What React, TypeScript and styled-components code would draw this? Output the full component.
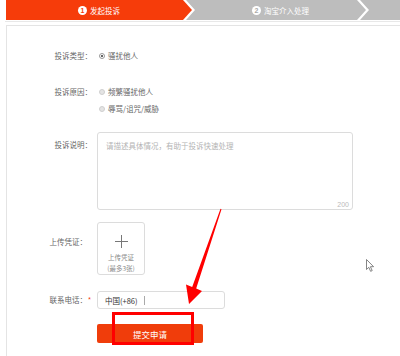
import React from 'react';
import styled, { createGlobalStyle } from 'styled-components';

const GlobalStyle = createGlobalStyle`
    html, body {
        margin:0;
        padding:0;
        background:#fff;
        overflow:hidden;
    }
    body {
        font-family:"Noto Sans CJK SC", "Liberation Sans", sans-serif;
    }
`

const Page = styled.div`
    position:relative;
    width:400px;
    height:356px;
    overflow:hidden;
`

const Steps = styled.div`
    display:flex;
    height:20px;
    margin-left:6px;
`
const Step = styled.div<{ $active?: boolean; $first?: boolean; $w: number }>`
    flex:none;
    width:${p => p.$w}px;
    margin-left:${p => (p.$first ? 0 : -6)}px;
    padding-left:${p => (p.$first ? 0 : 9)}px;
    box-sizing:border-box;
    background:${p => (p.$active ? '#f63c0a' : '#bdbdbd')};
    clip-path:polygon(0 0, calc(100% - 9px) 0, 100% 50%, calc(100% - 9px) 100%, 0 100%, ${p => (p.$first ? '0' : '9px')} 50%);
    display:flex;
    align-items:center;
    justify-content:center;
    gap:3px;
    color:#fff;
    font-size:7.5px;
`
const StepNum = styled.span<{ $active?: boolean }>`
    width:9px;
    height:9px;
    border-radius:50%;
    background:#fff;
    color:${p => (p.$active ? '#f63c0a' : '#aaa')};
    font-family:"Liberation Sans", sans-serif;
    font-weight:bold;
    font-size:7px;
    line-height:9px;
    text-align:center;
`

const Rule = styled.div`
    height:1px;
    margin-top:1px;
    margin-left:5px;
    background:#e8e8e8;
`

const Panel = styled.div`
    margin-top:3px;
    margin-left:6px;
    width:420px;
    height:340px;
    border:1px solid #e4e4e4;
    border-right:none;
    padding-top:24px;
    box-sizing:border-box;
`

const Row = styled.div<{ $gap?: number; $center?: boolean }>`
    display:flex;
    align-items:${p => (p.$center ? 'center' : 'flex-start')};
    gap:5px;
    margin-top:${p => p.$gap || 0}px;
`
const Label = styled.div<{ $pad?: number }>`
    flex:none;
    width:85px;
    margin-top:${p => p.$pad || 0}px;
    text-align:right;
    font-size:7.5px;
    line-height:12px;
    color:#666;
`
const Star = styled.span<{ $hide?: boolean }>`
    display:inline-block;
    width:5px;
    text-align:center;
    color:#f63c0a;
    visibility:${p => (p.$hide ? 'hidden' : 'visible')};
`

const Options = styled.div`
    display:flex;
    flex-direction:column;
    gap:5px;
`
const Option = styled.label`
    display:flex;
    align-items:center;
    gap:3px;
    padding-left:2px;
    font-size:7.5px;
    line-height:12px;
    color:#666;
`
const Radio = styled.span<{ $on?: boolean }>`
    width:6px;
    height:6px;
    box-sizing:border-box;
    border-radius:50%;
    border:1px solid ${p => (p.$on ? '#999' : '#cfcfcf')};
    background:${p => (p.$on ? '#fff' : '#e4e4e4')};
    display:flex;
    align-items:center;
    justify-content:center;
    &::after {
        content:'';
        width:2px;
        height:2px;
        border-radius:50%;
        background:${p => (p.$on ? '#333' : 'transparent')};
    }
`

const TextBox = styled.div`
    position:relative;
    width:256px;
    height:78px;
`
const Area = styled.textarea`
    width:100%;
    height:100%;
    box-sizing:border-box;
    border:1px solid #dcdcdc;
    border-radius:3px;
    padding:7px 8px;
    resize:none;
    font-family:inherit;
    font-size:7.5px;
    line-height:12px;
    color:#333;
    &::placeholder {
        color:#b4b4b4;
    }
`
const Counter = styled.span`
    position:absolute;
    right:4px;
    bottom:2px;
    font-family:"Liberation Sans", sans-serif;
    font-size:7px;
    color:#bbb;
`

const Upload = styled.div`
    width:48px;
    height:53px;
    box-sizing:border-box;
    border:1px solid #dcdcdc;
    border-radius:3px;
    padding-top:12px;
    display:flex;
    flex-direction:column;
    align-items:center;
`
const UploadText = styled.div`
    margin-top:4px;
    font-size:6.5px;
    line-height:11px;
    color:#888;
    text-align:center;
`

const Phone = styled.div`
    width:128px;
    height:18px;
    box-sizing:border-box;
    border:1px solid #dcdcdc;
    border-radius:3px;
    padding-left:7px;
    display:flex;
    align-items:center;
    font-size:7.5px;
    color:#333;
`
const Caret = styled.span`
    width:1px;
    height:9px;
    margin-left:6px;
    background:#aaa;
`

const Submit = styled.button`
    width:106px;
    height:19px;
    border:none;
    border-radius:2px;
    background:#f03d0b;
    color:#fff;
    font-family:inherit;
    font-size:8.5px;
    padding:0;
`

const Mark = styled.div`
    position:absolute;
    left:112px;
    top:312px;
    width:82px;
    height:33px;
    box-sizing:border-box;
    border:3px solid #ff0000;
`
const Overlay = styled.svg`
    position:absolute;
    left:0;
    top:0;
    pointer-events:none;
`

const App = () => {
    return (
        <Page>
            <GlobalStyle />
            <Steps>
                <Step $first $active $w={186}>
                    <StepNum $active>1</StepNum>发起投诉
                </Step>
                <Step $w={180}>
                    <StepNum>2</StepNum>淘宝介入处理
                </Step>
                <Step $w={60} />
            </Steps>
            <Rule />
            <Panel>
                <Row>
                    <Label>投诉类型：</Label>
                    <Option><Radio $on />骚扰他人</Option>
                </Row>
                <Row $gap={24}>
                    <Label>投诉原因：</Label>
                    <Options>
                        <Option><Radio />频繁骚扰他人</Option>
                        <Option><Radio />辱骂/诅咒/威胁</Option>
                    </Options>
                </Row>
                <Row $gap={17}>
                    <Label $pad={7}>投诉说明：</Label>
                    <TextBox>
                        <Area placeholder="请描述具体情况，有助于投诉快速处理" />
                        <Counter>200</Counter>
                    </TextBox>
                </Row>
                <Row $gap={12}>
                    <Label $pad={14}>上传凭证：<Star $hide>*</Star></Label>
                    <Upload>
                        <svg width="13" height="13" viewBox="0 0 13 13">
                            <path d="M6.5 0v13M0 6.5h13" stroke="#777" strokeWidth="1" fill="none" />
                        </svg>
                        <UploadText>上传凭证<br />(最多3张)</UploadText>
                    </Upload>
                </Row>
                <Row $gap={16} $center>
                    <Label>联系电话：<Star>*</Star></Label>
                    <Phone>中国(+86)<Caret /></Phone>
                </Row>
                <Row $gap={15}>
                    <Label />
                    <Submit>提交申请</Submit>
                </Row>
            </Panel>
            <Mark />
            <Overlay width="400" height="356" viewBox="0 0 400 356">
                <polygon
                    points="220.5,208.8 221.5,209.2 196.2,288.4 202,291 189,304 186,284.6 192.2,287"
                    fill="#ff0000"
                />
                <path
                    d="M366.5 259.5v10l2.3-2.2 1.8 4 1.6-0.7-1.8-3.9h3.2z"
                    fill="#fff"
                    stroke="#666"
                    strokeWidth="0.8"
                    strokeLinejoin="round"
                />
            </Overlay>
        </Page>
    );
};

export default App;
